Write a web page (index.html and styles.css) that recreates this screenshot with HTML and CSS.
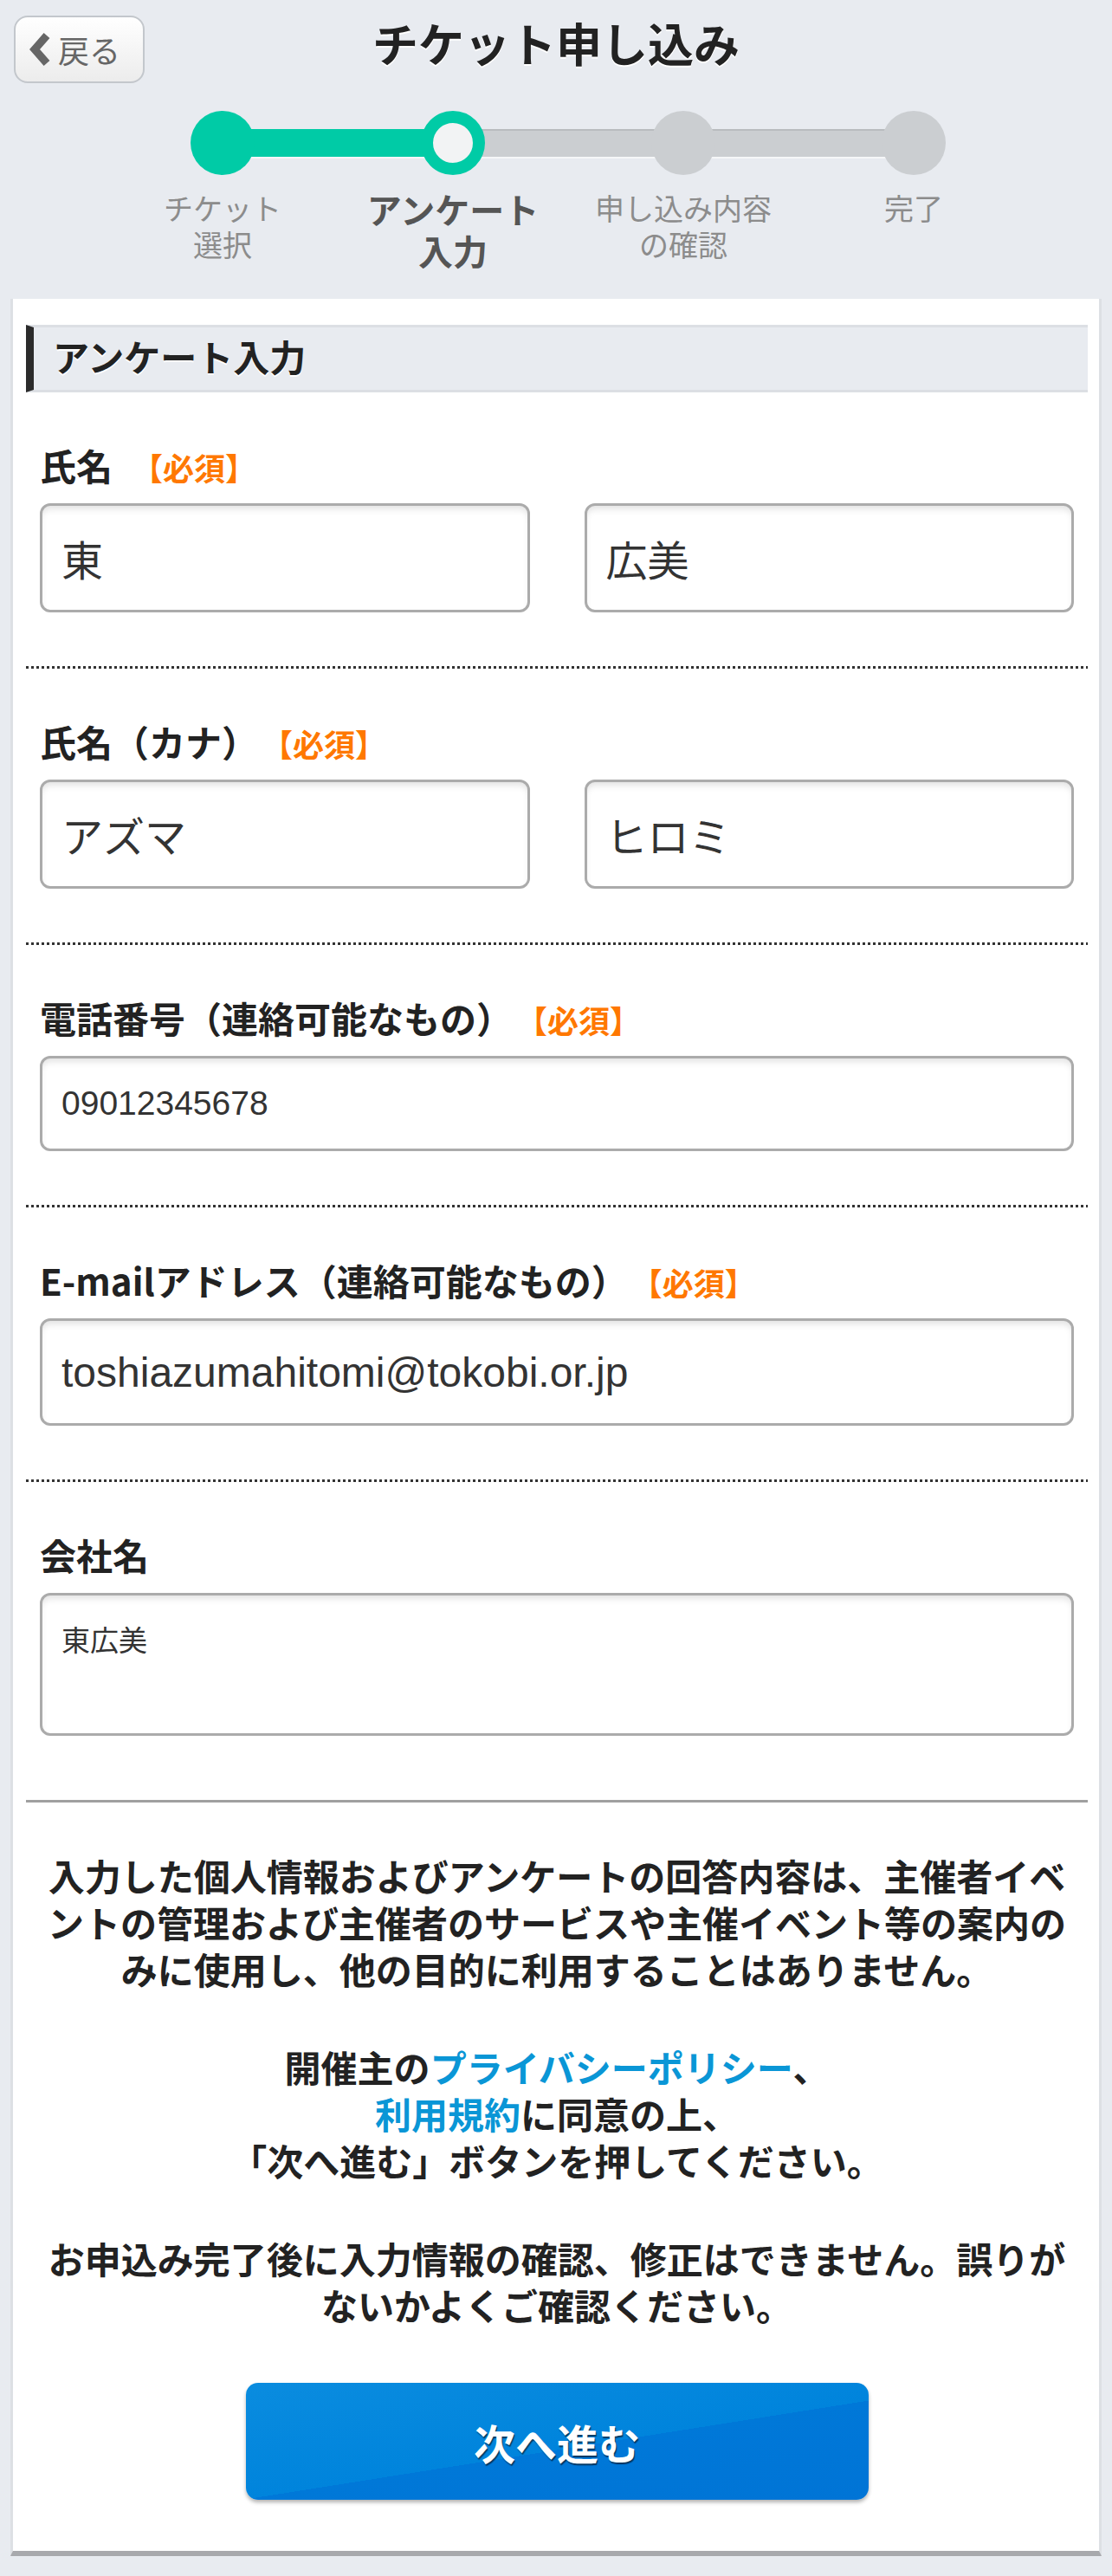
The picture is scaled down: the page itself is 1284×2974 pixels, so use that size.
FILE: index.html
```html
<!DOCTYPE html>
<html lang="ja">
<head>
    <meta charset="UTF-8">
    <meta name="viewport" content="width=device-width, initial-scale=1.0">
    <title>チケット申し込み</title>
    <link rel="stylesheet" href="styles.css">
</head>
<body>
    <header class="topbar">
        <a class="back-btn" href="#">
            <svg class="back-icon" viewBox="0 0 28 40"><path d="M22 4 L8 20 L22 36"/></svg>
            <span>戻る</span>
        </a>
        <h1 class="page-title">チケット申し込み</h1>
    </header>

    <ol class="steps">
        <li class="step done"><span class="step-dot"></span><span class="step-label">チケット<br>選択</span></li>
        <li class="step current"><span class="step-dot"></span><span class="step-label">アンケート<br>入力</span></li>
        <li class="step"><span class="step-dot"></span><span class="step-label">申し込み内容<br>の確認</span></li>
        <li class="step"><span class="step-dot"></span><span class="step-label">完了</span></li>
    </ol>

    <main class="card">
        <h2 class="section-title">アンケート入力</h2>

        <div class="field">
            <p class="field-label">氏名<span class="required">【必須】</span></p>
            <div class="field-pair">
                <input class="input" type="text" value="東">
                <input class="input" type="text" value="広美">
            </div>
        </div>

        <div class="field">
            <p class="field-label">氏名（カナ）<span class="required">【必須】</span></p>
            <div class="field-pair">
                <input class="input" type="text" value="アズマ">
                <input class="input" type="text" value="ヒロミ">
            </div>
        </div>

        <div class="field">
            <p class="field-label">電話番号（連絡可能なもの）<span class="required">【必須】</span></p>
            <input class="input input-tel" type="tel" value="09012345678">
        </div>

        <div class="field">
            <p class="field-label">E-mailアドレス（連絡可能なもの）<span class="required">【必須】</span></p>
            <input class="input input-mail" type="email" value="toshiazumahitomi@tokobi.or.jp">
        </div>

        <div class="field field-last">
            <p class="field-label">会社名</p>
            <textarea class="input textarea">東広美</textarea>
        </div>

        <div class="notice">
            <p>入力した個人情報およびアンケートの回答内容は、主催者イベントの管理および主催者のサービスや主催イベント等の案内のみに使用し、他の目的に利用することはありません。</p>
            <p>開催主の<a href="#">プライバシーポリシー</a>、<br><a href="#">利用規約</a>に同意の上、<br>「次へ進む」ボタンを押してください。</p>
            <p>お申込み完了後に入力情報の確認、修正はできません。誤りがないかよくご確認ください。</p>
            <button class="next-btn" type="button">次へ進む</button>
        </div>
    </main>
</body>
</html>
```

FILE: styles.css
```css
html {
    background-color: #e8ebf0;
}
body {
    margin: 0;
    padding-bottom: 23px;
    background-color: #e8ebf0;
    font-family: "Noto Sans CJK JP", sans-serif;
    color: #222;
}

/* header */
.topbar {
    display: grid;
    grid-template-columns: 1fr auto 1fr;
    align-items: start;
    padding: 18px 16px 0;
}
.back-btn {
    justify-self: start;
    display: flex;
    align-items: center;
    gap: 7px;
    box-sizing: border-box;
    width: 151px;
    height: 78px;
    padding-left: 14px;
    border: 2px solid #c3c7cc;
    border-radius: 16px;
    background: linear-gradient(#fff, #ececec);
    color: #666;
    font-size: 36px;
    line-height: 1;
    text-decoration: none;
}
.back-icon {
    width: 28px;
    height: 40px;
    fill: none;
    stroke: #666;
    stroke-width: 9;
}
.page-title {
    margin: 5px 0 0;
    font-size: 53px;
    line-height: 53px;
    font-weight: 700;
    color: #222;
    text-shadow: 0 2px 0 #fff;
}

/* steps */
.steps {
    display: grid;
    grid-template-columns: repeat(4, 266px);
    margin: 32px 0 0 124px;
    padding: 0 0 32px;
    list-style: none;
}
.step {
    position: relative;
    display: flex;
    flex-direction: column;
    align-items: center;
    text-align: center;
}
.step::after {
    content: "";
    position: absolute;
    top: 21px;
    left: 50%;
    width: 100%;
    height: 32px;
    background-color: #cbced1;
    box-shadow: inset 0 2px 0 #b9bcbf, 0 2px 0 #f5f6f8;
}
.step.done::after {
    background-color: #00cba6;
    box-shadow: 0 2px 0 #f5f6f8;
}
.step:last-child::after {
    content: none;
}
.step-dot {
    position: relative;
    z-index: 1;
    box-sizing: border-box;
    width: 74px;
    height: 74px;
    border-radius: 50%;
    background-color: #cbced1;
}
.step.done .step-dot {
    background-color: #00cba6;
}
.step.current .step-dot {
    border: 14px solid #00cba6;
    background-color: #f2f3f4;
}
.step-label {
    margin-top: 17px;
    font-size: 34px;
    line-height: 42px;
    color: #8c8c8c;
}
.step.current .step-label {
    margin-top: 15px;
    font-size: 40px;
    line-height: 48px;
    font-weight: 700;
    color: #555;
}

/* card */
.card {
    display: block;
    margin: 0 12px;
    padding: 30px 13px 59px 15px;
    background-color: #fff;
    border-left: 3px solid #dde0e4;
    border-right: 3px solid #dde0e4;
    border-bottom: 6px solid #a8a9ad;
}
.section-title {
    margin: 0;
    padding: 0 0 6px 22px;
    border-left: 9px solid #2b2b2b;
    border-top: 3px solid #dcdfe4;
    border-bottom: 3px solid #dcdfe4;
    background-color: #e8ebf0;
    font-size: 42px;
    line-height: 66px;
    font-weight: 700;
    color: #222;
    text-shadow: 0 2px 0 #fff;
}

/* form fields */
.field {
    padding: 63px 16px 65px;
    background: repeating-linear-gradient(90deg, #333 0 3px, transparent 3px 6px) left bottom / 100% 3px no-repeat;
}
.field-last {
    padding-bottom: 74px;
    background: none;
    border-bottom: 3px solid #a0a0a0;
}
.field-label {
    margin: 0 0 23px;
    font-size: 42px;
    line-height: 42px;
    font-weight: 700;
    color: #222;
}
.required {
    margin-left: 22px;
    font-size: 36px;
    line-height: 1;
    color: #ff7800;
}
.field-pair {
    display: grid;
    grid-template-columns: 1fr 1fr;
    gap: 63px;
}
.input {
    display: block;
    box-sizing: border-box;
    width: 100%;
    height: 126px;
    margin: 0;
    padding: 0 22px;
    border: 3px solid #ababab;
    border-radius: 12px;
    background-color: #fff;
    box-shadow: inset 0 6px 9px -3px rgba(0, 0, 0, 0.13);
    font-family: "Liberation Sans", "Noto Sans CJK JP", sans-serif;
    font-size: 48px;
    color: #333;
    outline: none;
}
.input-tel {
    height: 110px;
    font-size: 39px;
}
.input-mail {
    height: 124px;
}
.textarea {
    height: 165px;
    padding: 30px 22px;
    font-size: 33px;
    line-height: 1.4;
    resize: none;
}

/* notice + button */
.notice {
    padding: 0 16px;
    text-align: center;
    font-size: 42px;
    line-height: 54px;
    font-weight: 700;
    color: #222;
}
.notice p {
    margin: 59px 0 0;
}
.notice p:first-child {
    margin-top: 57px;
}
.notice a {
    color: #0a96d6;
    text-decoration: none;
}
.next-btn {
    display: block;
    width: 719px;
    height: 135px;
    margin: 63px auto 0;
    border: none;
    border-radius: 14px;
    background: linear-gradient(171deg, #0a8cdf 0%, #0084dc 54%, #0078d8 54%, #0074d6 100%);
    box-shadow: 0 3px 4px rgba(0, 0, 0, 0.3);
    color: #fff;
    font-family: "Noto Sans CJK JP", sans-serif;
    font-size: 48px;
    font-weight: 700;
    text-shadow: 1px 2px 1px rgba(0, 0, 0, 0.55);
    cursor: pointer;
}
```
